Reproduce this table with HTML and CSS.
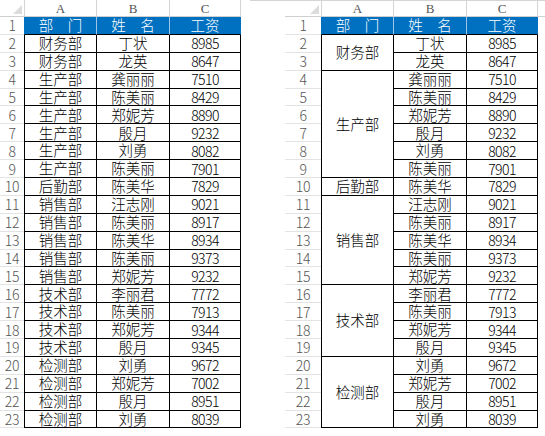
FILE: index.html
```html
<!DOCTYPE html>
<html lang="zh">
<head>
<meta charset="utf-8">
<link rel="stylesheet" href="styles.css">
</head>
<body>
<div class="page">
  <div class="sheet sheet-left">
    <div class="corner"><span class="tri"></span></div>
    <div class="colhdr first">A</div><div class="colhdr">B</div><div class="colhdr last">C</div>

    <div class="rowhdr">1</div><div class="th first">部　门</div><div class="th">姓　名</div><div class="th last">工资</div>
    <div class="rowhdr">2</div><div class="td first">财务部</div><div class="td">丁状</div><div class="td num">8985</div>
    <div class="rowhdr">3</div><div class="td first">财务部</div><div class="td">龙英</div><div class="td num">8647</div>
    <div class="rowhdr">4</div><div class="td first">生产部</div><div class="td">龚丽丽</div><div class="td num">7510</div>
    <div class="rowhdr">5</div><div class="td first">生产部</div><div class="td">陈美丽</div><div class="td num">8429</div>
    <div class="rowhdr">6</div><div class="td first">生产部</div><div class="td">郑妮芳</div><div class="td num">8890</div>
    <div class="rowhdr">7</div><div class="td first">生产部</div><div class="td">殷月</div><div class="td num">9232</div>
    <div class="rowhdr">8</div><div class="td first">生产部</div><div class="td">刘勇</div><div class="td num">8082</div>
    <div class="rowhdr">9</div><div class="td first">生产部</div><div class="td">陈美丽</div><div class="td num">7901</div>
    <div class="rowhdr">10</div><div class="td first">后勤部</div><div class="td">陈美华</div><div class="td num">7829</div>
    <div class="rowhdr">11</div><div class="td first">销售部</div><div class="td">汪志刚</div><div class="td num">9021</div>
    <div class="rowhdr">12</div><div class="td first">销售部</div><div class="td">陈美丽</div><div class="td num">8917</div>
    <div class="rowhdr">13</div><div class="td first">销售部</div><div class="td">陈美华</div><div class="td num">8934</div>
    <div class="rowhdr">14</div><div class="td first">销售部</div><div class="td">陈美丽</div><div class="td num">9373</div>
    <div class="rowhdr">15</div><div class="td first">销售部</div><div class="td">郑妮芳</div><div class="td num">9232</div>
    <div class="rowhdr">16</div><div class="td first">技术部</div><div class="td">李丽君</div><div class="td num">7772</div>
    <div class="rowhdr">17</div><div class="td first">技术部</div><div class="td">陈美丽</div><div class="td num">7913</div>
    <div class="rowhdr">18</div><div class="td first">技术部</div><div class="td">郑妮芳</div><div class="td num">9344</div>
    <div class="rowhdr">19</div><div class="td first">技术部</div><div class="td">殷月</div><div class="td num">9345</div>
    <div class="rowhdr">20</div><div class="td first">检测部</div><div class="td">刘勇</div><div class="td num">9672</div>
    <div class="rowhdr">21</div><div class="td first">检测部</div><div class="td">郑妮芳</div><div class="td num">7002</div>
    <div class="rowhdr">22</div><div class="td first">检测部</div><div class="td">殷月</div><div class="td num">8951</div>
    <div class="rowhdr">23</div><div class="td first">检测部</div><div class="td">刘勇</div><div class="td num">8039</div>
  </div>

  <div class="panel-right">
    <div class="sheet sheet-right">
      <div class="corner"><span class="tri"></span></div>
      <div class="colhdr first">A</div><div class="colhdr">B</div><div class="colhdr last">C</div><div class="colhdr stub"></div>

      <div class="rowhdr">1</div><div class="th first">部　门</div><div class="th">姓　名</div><div class="th last">工资</div>
      <div class="rowhdr">2</div><div class="td first span2">财务部</div><div class="td cb">丁状</div><div class="td num cc">8985</div>
      <div class="rowhdr">3</div><div class="td cb">龙英</div><div class="td num cc">8647</div>
      <div class="rowhdr">4</div><div class="td first span6">生产部</div><div class="td cb">龚丽丽</div><div class="td num cc">7510</div>
      <div class="rowhdr">5</div><div class="td cb">陈美丽</div><div class="td num cc">8429</div>
      <div class="rowhdr">6</div><div class="td cb">郑妮芳</div><div class="td num cc">8890</div>
      <div class="rowhdr">7</div><div class="td cb">殷月</div><div class="td num cc">9232</div>
      <div class="rowhdr">8</div><div class="td cb">刘勇</div><div class="td num cc">8082</div>
      <div class="rowhdr">9</div><div class="td cb">陈美丽</div><div class="td num cc">7901</div>
      <div class="rowhdr">10</div><div class="td first">后勤部</div><div class="td cb">陈美华</div><div class="td num cc">7829</div>
      <div class="rowhdr">11</div><div class="td first span5">销售部</div><div class="td cb">汪志刚</div><div class="td num cc">9021</div>
      <div class="rowhdr">12</div><div class="td cb">陈美丽</div><div class="td num cc">8917</div>
      <div class="rowhdr">13</div><div class="td cb">陈美华</div><div class="td num cc">8934</div>
      <div class="rowhdr">14</div><div class="td cb">陈美丽</div><div class="td num cc">9373</div>
      <div class="rowhdr">15</div><div class="td cb">郑妮芳</div><div class="td num cc">9232</div>
      <div class="rowhdr">16</div><div class="td first span4">技术部</div><div class="td cb">李丽君</div><div class="td num cc">7772</div>
      <div class="rowhdr">17</div><div class="td cb">陈美丽</div><div class="td num cc">7913</div>
      <div class="rowhdr">18</div><div class="td cb">郑妮芳</div><div class="td num cc">9344</div>
      <div class="rowhdr">19</div><div class="td cb">殷月</div><div class="td num cc">9345</div>
      <div class="rowhdr">20</div><div class="td first span4">检测部</div><div class="td cb">刘勇</div><div class="td num cc">9672</div>
      <div class="rowhdr">21</div><div class="td cb">郑妮芳</div><div class="td num cc">7002</div>
      <div class="rowhdr">22</div><div class="td cb">殷月</div><div class="td num cc">8951</div>
      <div class="rowhdr">23</div><div class="td cb">刘勇</div><div class="td num cc">8039</div>
    </div>
  </div>
</div>
</body>
</html>
```

FILE: styles.css
```css
* { box-sizing: border-box; }
html, body { margin: 0; padding: 0; background: #fff; }
body {
  width: 545px;
  height: 436px;
  overflow: hidden;
  font-family: "Noto Sans CJK SC", sans-serif;
  color: #000;
}
.page {
  display: flex;
  align-items: flex-start;
}
.sheet {
  display: grid;
  grid-template-rows: 17px repeat(23, 17.9px);
}
.sheet-left {
  grid-template-columns: 24px 73px 73px 71px;
}
.panel-right {
  margin-left: 9px;
  width: 295px;
  border-top: 1px solid #d4d4d4;
  padding-left: 35px;
}
.sheet-right {
  grid-template-columns: 36px 73px 73px 71px 8px;
  grid-template-rows: 16px repeat(23, 17.9px);
}
.corner {
  position: relative;
  border-bottom: 1px solid #cfcfcf;
}
.tri {
  position: absolute;
  right: 2px;
  bottom: 2px;
  width: 0;
  height: 0;
  border-style: solid;
  border-width: 0 0 9px 9px;
  border-color: transparent transparent #dcdcdc transparent;
}
.colhdr {
  display: flex;
  align-items: center;
  justify-content: center;
  border-right: 1px solid #d4d4d4;
  border-bottom: 1px solid #cfcfcf;
  font-family: "Liberation Serif", serif;
  font-size: 13px;
  color: #555;
  padding-top: 1px;
}
.colhdr.first { border-left: 1px solid #d4d4d4; }
.colhdr.stub { border-right: none; }
.rowhdr {
  grid-column: 1;
  display: flex;
  align-items: center;
  justify-content: center;
  border-bottom: 1px solid #e3e3e3;
  font-family: "Noto Sans CJK SC", sans-serif;
  font-weight: 300;
  font-size: 14px;
  letter-spacing: -0.3px;
  color: #555;
}
.th, .td {
  display: flex;
  align-items: center;
  justify-content: center;
  font-size: 14.5px;
  font-weight: 300;
  line-height: 1;
  white-space: nowrap;
}
.th {
  background: #0070c0;
  color: #fff;
  border-right: 1px solid #9fc3e6;
  border-bottom: 1px solid #000;
}
.th.first { border-left: 1px solid #0070c0; }
.th.last { border-right: 1px solid #0070c0; }
.td {
  border-right: 1px solid #000;
  border-bottom: 1px solid #000;
}
.td.first { border-left: 1px solid #000; grid-column: 2; }
.num {
  font-size: 14px;
  letter-spacing: -0.6px;
}
.cb { grid-column: 3; }
.cc { grid-column: 4; }
.span2 { grid-row: span 2; }
.span4 { grid-row: span 4; }
.span5 { grid-row: span 5; }
.span6 { grid-row: span 6; }
```
